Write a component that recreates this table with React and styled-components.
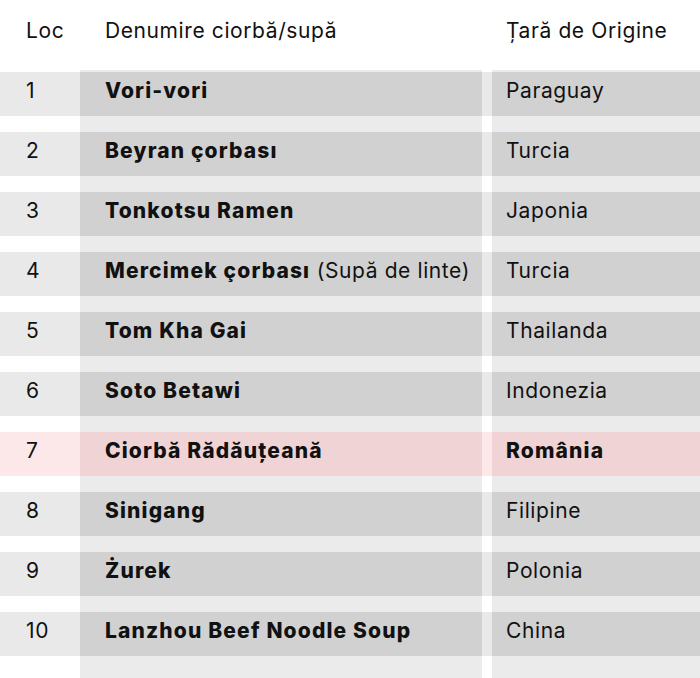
import React from 'react';
import styled, { createGlobalStyle } from 'styled-components';

const GlobalStyle = createGlobalStyle`
  html, body {
    margin: 0;
    padding: 0;
    background: #fff;
  }
  body {
    font-family: Inter, 'Noto Sans', sans-serif;
    color: #111;
  }
`;

const COLS = '80px 402px 10px 1fr';

const soups = [
  { loc: 1, name: 'Vori-vori', country: 'Paraguay' },
  { loc: 2, name: 'Beyran çorbası', country: 'Turcia' },
  { loc: 3, name: 'Tonkotsu Ramen', country: 'Japonia' },
  { loc: 4, name: 'Mercimek çorbası', extra: ' (Supă de linte)', country: 'Turcia' },
  { loc: 5, name: 'Tom Kha Gai', country: 'Thailanda' },
  { loc: 6, name: 'Soto Betawi', country: 'Indonezia' },
  { loc: 7, name: 'Ciorbă Rădăuțeană', country: 'România', highlight: true },
  { loc: 8, name: 'Sinigang', country: 'Filipine' },
  { loc: 9, name: 'Żurek', country: 'Polonia' },
  { loc: 10, name: 'Lanzhou Beef Noodle Soup', country: 'China' },
];

const Page = styled.div`
  width: 700px;
  height: 678px;
  overflow: hidden;
`;

const Header = styled.div`
  display: grid;
  grid-template-columns: ${COLS};
  height: 70px;
  align-items: center;
  font-size: 21px;
  letter-spacing: 0.6px;
  padding-bottom: 10px;
  box-sizing: border-box;
`;

const HeadCell = styled.div`
  padding-left: ${p => p.$pad}px;
`;

const Body = styled.div`
  display: flex;
  flex-direction: column;
  gap: 16.5px;
  padding: 2px 0 30px;
  background: linear-gradient(
    to right,
    #fff 0 80px,
    #ebebeb 80px 482px,
    #fff 482px 492px,
    #ebebeb 492px 100%
  );
`;

const Row = styled.div`
  display: grid;
  grid-template-columns: ${COLS};
  height: 43.5px;
  font-size: 21px;
`;

const Cell = styled.div`
  display: flex;
  align-items: center;
  box-sizing: border-box;
  padding: 0 0 7px ${p => p.$pad || 0}px;
  background: ${p =>
    p.$strong
      ? p.$hl ? '#f0d3d4' : '#d1d1d1'
      : p.$hl ? '#fde8e9' : '#e9e9e9'};
  font-weight: ${p => (p.$bold ? 800 : 400)};
  letter-spacing: ${p => (p.$bold ? 1.15 : 0.6)}px;
  white-space: nowrap;
`;

const Extra = styled.span`
  font-weight: 400;
  letter-spacing: 0.6px;
  white-space: pre;
`;

export default function App() {
  return (
    <Page>
      <GlobalStyle />
      <Header>
        <HeadCell $pad={26}>Loc</HeadCell>
        <HeadCell $pad={25}>Denumire ciorbă/supă</HeadCell>
        <div />
        <HeadCell $pad={14}>Țară de Origine</HeadCell>
      </Header>
      <Body>
        {soups.map(s => (
          <Row key={s.loc}>
            <Cell $pad={26} $hl={s.highlight}>{s.loc}</Cell>
            <Cell $pad={25} $strong $bold $hl={s.highlight}>
              {s.name}
              {s.extra && <Extra>{s.extra}</Extra>}
            </Cell>
            <Cell $hl={s.highlight} />
            <Cell $pad={14} $strong $bold={s.highlight} $hl={s.highlight}>
              {s.country}
            </Cell>
          </Row>
        ))}
      </Body>
    </Page>
  );
}
